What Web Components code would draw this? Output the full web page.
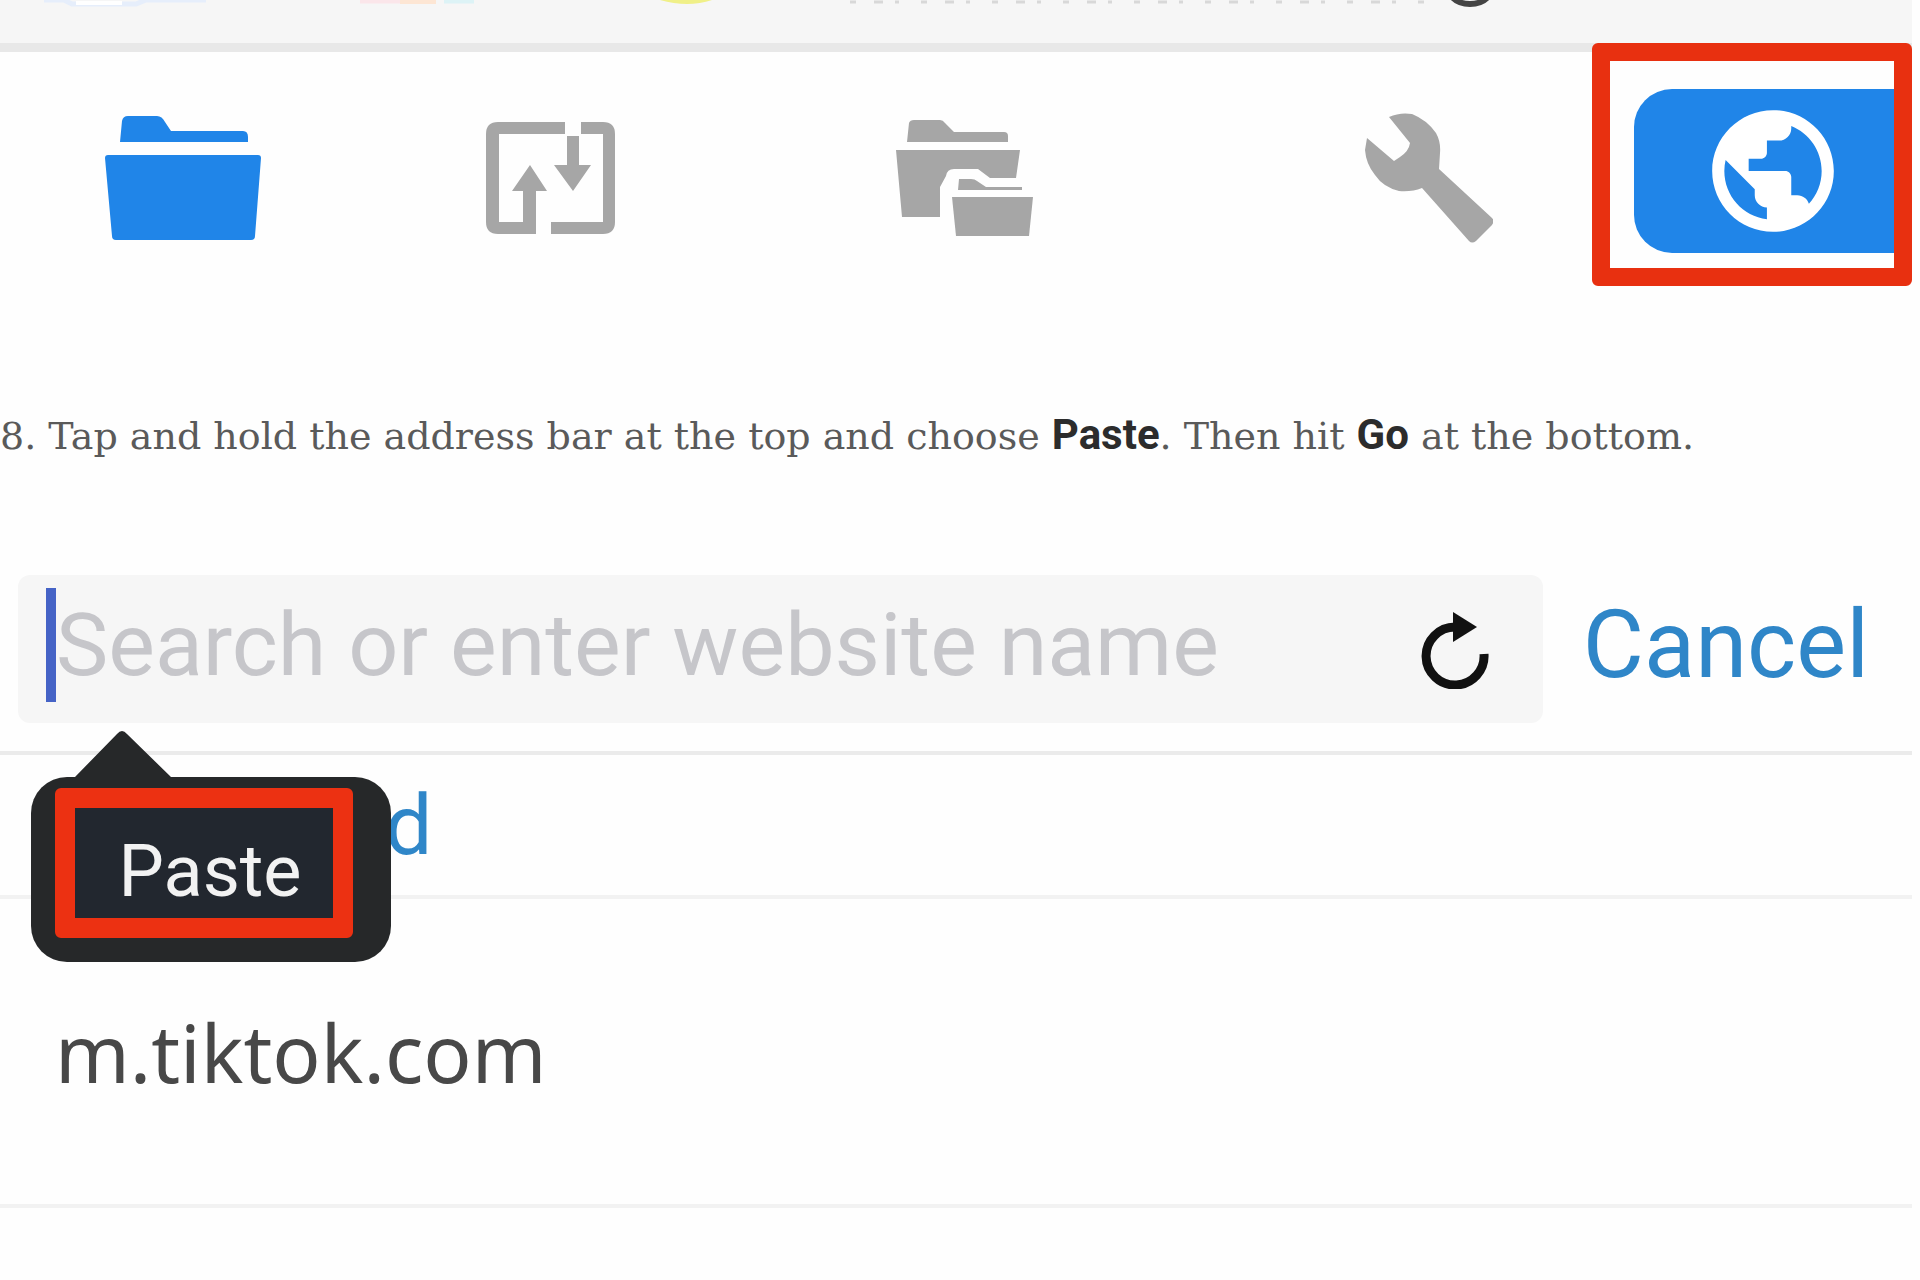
<!DOCTYPE html>
<html lang="en">
<head>
<meta charset="utf-8">
<meta name="viewport" content="width=device-width, initial-scale=1">
<title>Paste the link</title>
<style>
    body {
        margin: 0;
        background: #fefefe;
        font-family: Roboto, "Liberation Sans", sans-serif;
    }
</style>
</head>
<body>
<guide-page>
    <page-header slot="header"></page-header>
    <tool-bar slot="toolbar"></tool-bar>
    <step-text slot="step">8. Tap and hold the address bar at the top and choose <b>Paste</b>. Then hit <b>Go</b> at the bottom.</step-text>
    <address-bar placeholder="Search or enter website name">
        <paste-menu>Paste</paste-menu>
    </address-bar>
    <result-list></result-list>
</guide-page>

<script>
function define(name, html) {
    const template = document.createElement("template");
    template.innerHTML = html;
    customElements.define(name, class extends HTMLElement {
        constructor() {
            super();
            this.attachShadow({ mode: "open" });
            this.shadowRoot.appendChild(template.content.cloneNode(true));
        }

        connectedCallback() {
            const input = this.shadowRoot.querySelector("input");
            if (input) {
                input.placeholder = this.getAttribute("placeholder") || "";
            }
        }
    });
}

define("guide-page", `
    <style>
        :host {
            display: flex;
            flex-direction: column;
            padding-right: 8px;
            overflow: hidden;
        }
    </style>
    <slot name="header"></slot>
    <slot name="toolbar"></slot>
    <slot name="step"></slot>
    <slot></slot>
`);

define("page-header", `
    <style>
        :host {
            display: block;
            height: 43px;
            background: #f6f6f6;
            border-bottom: 9px solid #e8e8e8;
        }
        svg { display: block; }
    </style>
    <!-- lower edges of the row that is scrolled out of view -->
    <svg width="1520" height="10" viewBox="0 0 1520 10" fill="none" aria-hidden="true">
        <path d="M44 0h20l8 4h64l10-4h60" stroke="#e6eefb" stroke-width="5"/>
        <path d="M76 3h46" stroke="#fff" stroke-width="4"/>
        <path d="M360 1h46" stroke="#fbe6ea" stroke-width="5"/>
        <path d="M400 1h36" stroke="#fde6d4" stroke-width="6"/>
        <path d="M444 1h30" stroke="#ddf3f6" stroke-width="5"/>
        <path d="M660 0Q688 8 712 0z" fill="#f0f088"/>
        <path d="M850 2h590" stroke="#d8d8d8" stroke-width="3" stroke-dasharray="6 18 9 12 4 22"/>
        <path d="M1453 -2Q1459 4 1470 4T1487 -2" stroke="#444" stroke-width="6"/>
    </svg>
`);

define("tool-bar", `
    <style>
        :host {
            display: grid;
            grid-template-columns: 381fr 410fr 469fr 269fr 278fr;
            padding: 37px 0 0 105px;
            color: #a6a6a6;
        }
        button {
            display: flex;
            align-items: center;
            height: 164px;
            padding: 14px 0 0;
            border: 0;
            background: none;
            color: inherit;
        }
        svg { display: block; fill: currentColor; }
        .files { color: #2085e8; }
        .browser {
            position: relative;
            justify-content: center;
            padding: 0;
            border-radius: 38px 0 0 38px;
            background: #2085e8;
            color: #fff;
        }
        .mark {
            position: absolute;
            inset: -46px 0 -33px -42px;
            border: 18px solid #e83010;
            border-radius: 6px;
        }
    </style>
    <button class="files" aria-label="Files">
        <svg width="156" height="124" viewBox="105 117 156 124">
            <path d="M120 143L122 122Q123 117 128 117H157Q162 117 165 123L171 132H243Q248 132 248 138V143Z"/>
            <path d="M108 156H258Q261 156 261 159L255 237Q255 241 251 241H116Q112 241 112 237L105 159Q105 156 108 156Z"/>
        </svg>
    </button>
    <button aria-label="Transfers">
        <svg width="130" height="114" viewBox="486 120 130 114">
            <path d="M565 121V133H499V221H523V190H512L530 164L547 190H536V233H498Q486 233 486 221V133Q486 121 498 121Z"/>
            <path d="M581 121H603Q615 121 615 133V221Q615 233 603 233H551V221H603V133H581Z"/>
            <path d="M567 135H579V164H591L573 190L554 164H567Z"/>
        </svg>
    </button>
    <button aria-label="Shared folders">
        <svg width="138" height="117" viewBox="896 120 138 117">
            <path d="M907 142L909 123Q910 120 914 120H940Q943 120 945 123L954 132H1004Q1008 132 1008 136V142Z"/>
            <path d="M896 150H1020L1016 178H990L978 169H954Q947 169 946 176L940 187V217H902Z"/>
            <path d="M958 190L959 179H971Q975 179 977 181L986 187H1022V190Z"/>
            <path d="M952 197H1033L1029 236H956Z"/>
        </svg>
    </button>
    <button aria-label="Settings">
        <svg width="128" height="130" viewBox="1365 113 128 130">
            <path d="M1389 117Q1400 112 1412 114Q1427 120 1436 133Q1441 142 1440 153L1439 169L1492 218Q1495 221 1492 225L1476 241Q1472 244 1469 241L1422 188Q1412 192 1399 191Q1383 187 1375 175Q1366 164 1365 150L1367 138L1394 161L1400 157Q1409 151 1410 143Z"/>
        </svg>
    </button>
    <button class="browser" aria-label="Browser">
        <svg width="146" height="146" viewBox="0 0 24 24">
            <path d="M12 2C6.48 2 2 6.48 2 12s4.48 10 10 10 10-4.48 10-10S17.52 2 12 2zm-1 17.93c-3.95-.49-7-3.85-7-7.93 0-.62.08-1.21.21-1.79L9 15v1c0 1.1.9 2 2 2v1.93zm6.9-2.54c-.26-.81-1-1.39-1.9-1.39h-1v-3c0-.55-.45-1-1-1H8v-2h2c.55 0 1-.45 1-1V7h2c1.1 0 2-.9 2-2v-.41c2.93 1.19 5 4.06 5 7.41 0 2.08-.8 3.97-2.1 5.39z"/>
        </svg>
        <span class="mark"></span>
    </button>
`);

define("step-text", `
    <style>
        :host {
            display: block;
            margin: 155px 0 111px;
            font: 38px/56px "DejaVu Serif", serif;
            color: #5a5a5a;
            white-space: nowrap;
        }
        ::slotted(b) {
            font-family: Roboto, sans-serif;
            font-size: 42px;
            line-height: 48px;
            color: #2c2c2c;
        }
    </style>
    <slot></slot>
`);

define("address-bar", `
    <style>
        :host {
            display: flex;
            align-items: center;
            gap: 40px;
            position: relative;
            padding: 0 43px 28px 18px;
            border-bottom: 4px solid #ebebeb;
        }
        form {
            display: flex;
            align-items: center;
            flex: 1;
            height: 148px;
            box-sizing: border-box;
            padding: 0 54px 8px 28px;
            border-radius: 12px;
            background: #f6f6f6;
        }
        .caret {
            width: 10px;
            height: 114px;
            background: #4563c6;
        }
        input {
            flex: 1;
            min-width: 0;
            padding: 0;
            border: 0;
            outline: 0;
            background: none;
            font: 88px/104px Roboto, sans-serif;
        }
        input::placeholder { color: #c6c6ca; opacity: 1; }
        button {
            padding: 10px 0 0;
            border: 0;
            background: none;
        }
        svg { display: block; }
        .cancel {
            padding: 0 0 8px;
            font: 94px/104px Roboto, sans-serif;
            color: #2f86c8;
        }
        ::slotted(paste-menu) {
            position: absolute;
            z-index: 1;
            top: 155px;
            left: 31px;
        }
    </style>
    <form>
        <span class="caret"></span>
        <input type="text" aria-label="Address">
        <button type="button" aria-label="Reload">
            <svg width="68" height="78" viewBox="1421 612 68 78">
                <path d="M1484 655A29 29 0 1 1 1455 628" fill="none" stroke="#111" stroke-width="9"/>
                <path d="M1453 613L1477 628L1453 643Z" fill="#111"/>
            </svg>
        </button>
    </form>
    <button type="button" class="cancel">Cancel</button>
    <slot></slot>
`);

define("paste-menu", `
    <style>
        :host { display: block; }
        .arrow {
            display: block;
            margin-left: 44px;
            fill: #262829;
        }
        .bubble {
            width: 360px;
            height: 185px;
            box-sizing: border-box;
            padding: 11px 38px 24px 24px;
            border-radius: 36px;
            background: #262829;
        }
        button {
            width: 100%;
            height: 100%;
            padding: 18px 0 0 12px;
            border: 20px solid #ec3112;
            border-radius: 6px;
            background: #22272f;
            color: #f2f2f2;
            font: 72px/84px Roboto, sans-serif;
        }
    </style>
    <svg class="arrow" width="96" height="47" viewBox="0 0 96 47"><path d="M0 47L42 4Q47 -2 52 4L96 47Z"/></svg>
    <div class="bubble"><button type="button"><slot></slot></button></div>
`);

define("result-list", `
    <style>
        :host { display: block; }
        a {
            display: flex;
            align-items: center;
            box-sizing: border-box;
            border-bottom: 4px solid #f2f2f2;
            text-decoration: none;
        }
        .top {
            height: 144px;
            padding-left: 385px;
            font-size: 84px;
            color: #2f86c8;
        }
        .site {
            height: 309px;
            padding-left: 55px;
            font-family: "Noto Sans", "Open Sans", sans-serif;
            font-size: 80px;
            color: #484848;
        }
    </style>
    <a class="top" href="#top">d</a>
    <a class="site" href="#site">m.tiktok.com</a>
`);
</script>
</body>
</html>
